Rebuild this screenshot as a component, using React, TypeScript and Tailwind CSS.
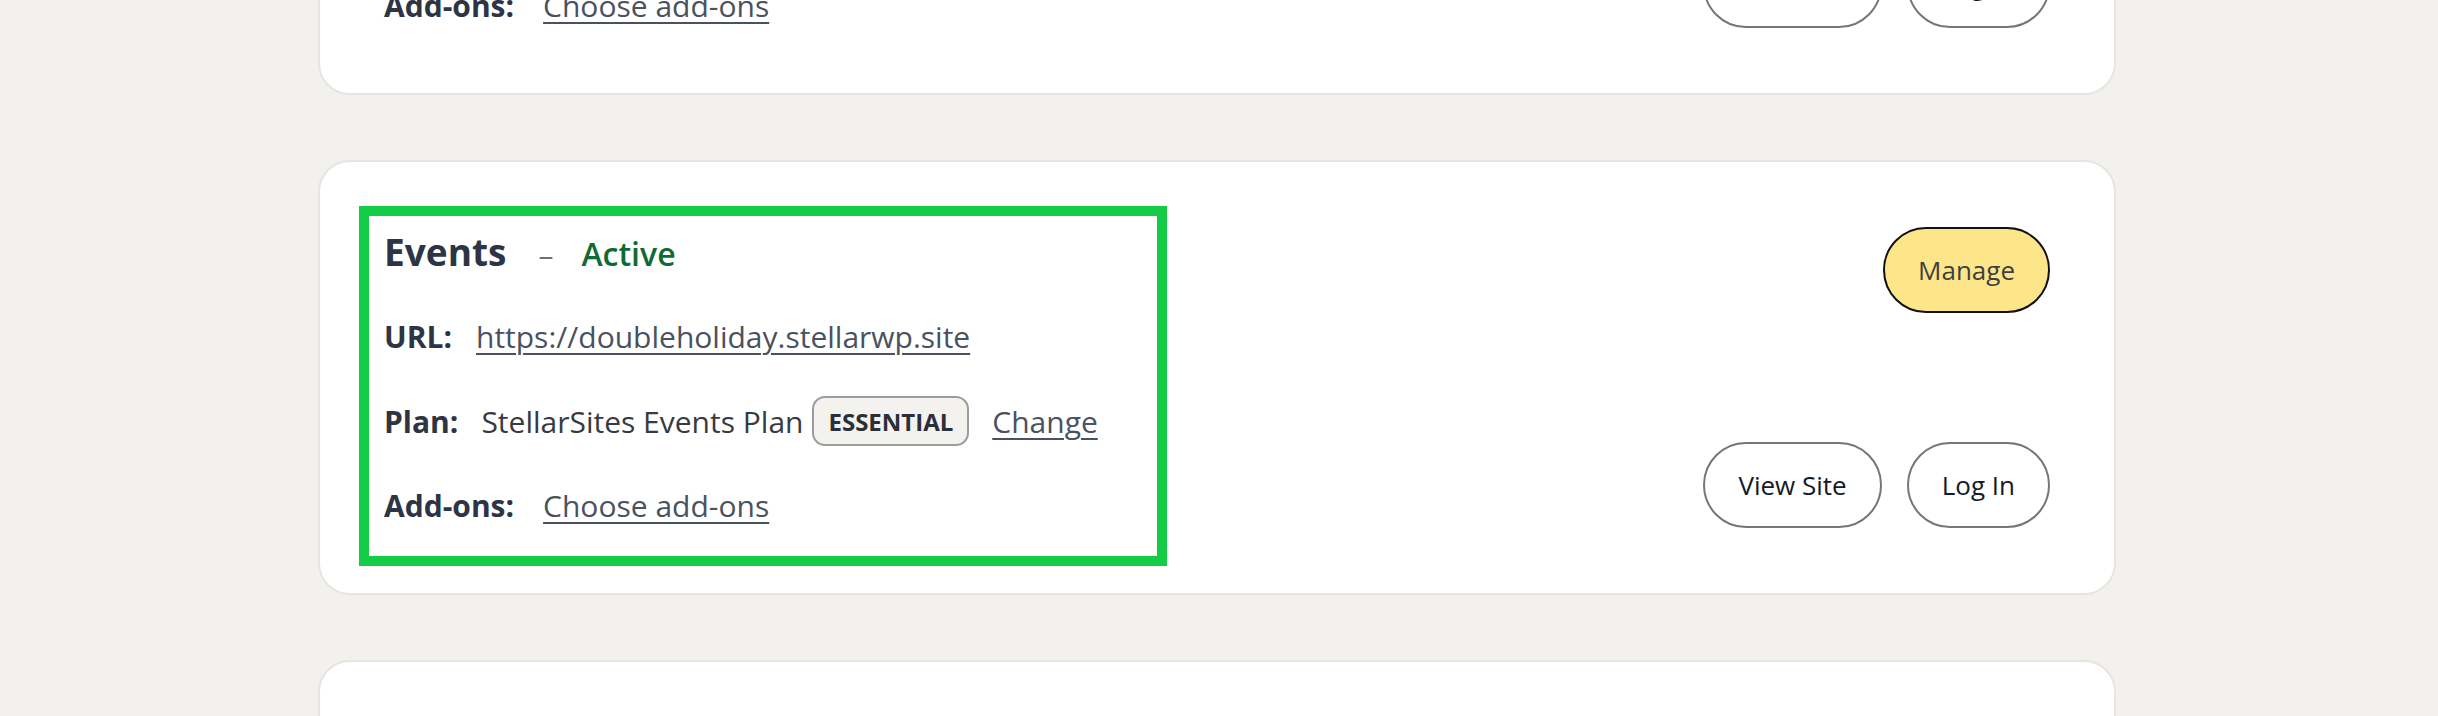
type Site = {
  name: string
  url: string
  plan: string
  tier: string
  highlight?: boolean
}

const sites: Site[] = [
  { name: "Store", url: "https://doubleholiday.stellarwp.site", plan: "StellarSites Store Plan", tier: "ESSENTIAL" },
  { name: "Events", url: "https://doubleholiday.stellarwp.site", plan: "StellarSites Events Plan", tier: "ESSENTIAL", highlight: true },
  { name: "Blog", url: "https://doubleholiday.stellarwp.site", plan: "StellarSites Blog Plan", tier: "ESSENTIAL" },
]

function SiteCard({ site }: { site: Site }) {
  return (
    <div className="flex justify-between rounded-[32px] border-2 border-[#e6e5e1] bg-white px-[64px] py-[65px]">
      <div className="relative flex flex-col gap-[37px] text-[30px] leading-[45px]">
        {site.highlight && (
          <div className="pointer-events-none absolute -left-[25px] -top-[21px] -bottom-[38px] w-[808px] border-[10px] border-[#14cc45]" />
        )}

        <div className="flex items-baseline">
          <h3 className="text-[37px] font-bold leading-[50px] text-[#2d3443]">{site.name}</h3>
          <span className="ml-[32px] text-[30px] text-[#6b6f76]">–</span>
          <span className="ml-[28px] text-[32px] font-semibold text-[#0f6b34]">Active</span>
        </div>

        <div className="flex items-baseline">
          <span className="font-bold text-[#2d3443]">URL:</span>
          <a className="ml-[24px] text-[#4a5160] underline decoration-2 underline-offset-[5px]">{site.url}</a>
        </div>

        <div className="flex h-[50px] items-center">
          <span className="font-bold text-[#2d3443]">Plan:</span>
          <span className="ml-[23px] text-[#363a42]">{site.plan}</span>
          <span className="ml-[9px] flex h-[50px] items-center rounded-[13px] border-2 border-[#9c9c9c] bg-[#f3f2ef] px-[14px] text-[24px] font-bold text-[#2a2f3a]">
            {site.tier}
          </span>
          <a className="ml-[23px] text-[#4a5160] underline decoration-2 underline-offset-[5px]">Change</a>
        </div>

        <div className="flex items-baseline">
          <span className="font-bold text-[#2d3443]">Add-ons:</span>
          <a className="ml-[29px] text-[#4a5160] underline decoration-2 underline-offset-[5px]">Choose add-ons</a>
        </div>
      </div>

      <div className="flex flex-col items-end justify-between">
        <button className="rounded-full border-2 border-[#111] bg-[#fde68a] px-[33px] py-[23px] text-[26px] leading-[36px] text-[#3f3f3f]">
          Manage
        </button>
        <div className="flex gap-[25px]">
          <button className="rounded-full border-2 border-[#767676] bg-white px-[33px] py-[23px] text-[26px] leading-[36px] text-[#141a26]">
            View Site
          </button>
          <button className="rounded-full border-2 border-[#767676] bg-white px-[33px] py-[23px] text-[26px] leading-[36px] text-[#141a26]">
            Log In
          </button>
        </div>
      </div>
    </div>
  )
}

export default function App() {
  return (
    <div className="min-h-screen overflow-hidden bg-[#f2f1ee]" style={{ fontFamily: '"Open Sans", "Noto Sans", sans-serif' }}>
      <div className="-mt-[340px] ml-[318px] flex w-[1798px] flex-col gap-[65px]">
        {sites.map((site) => (
          <SiteCard key={site.name} site={site} />
        ))}
      </div>
    </div>
  )
}
